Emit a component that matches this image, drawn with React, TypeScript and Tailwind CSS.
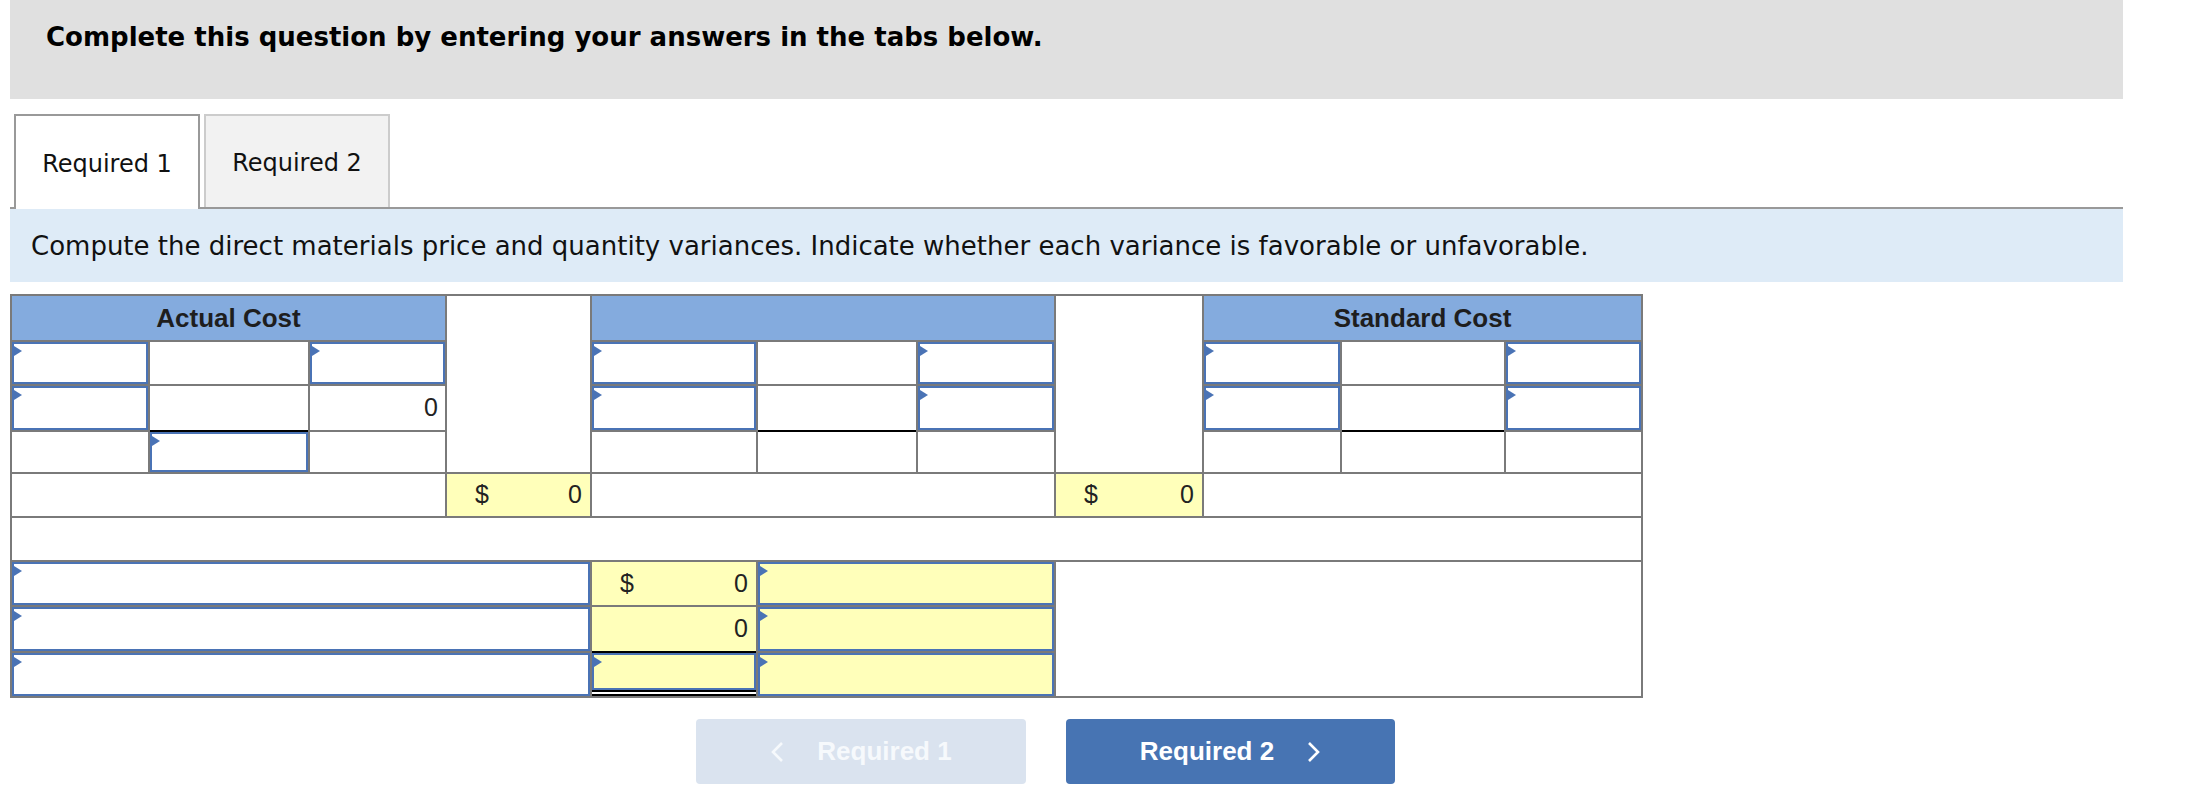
import React from "react";

const verdana = "font-['DejaVu_Sans','Verdana',sans-serif]";
const arial = "font-['Liberation_Sans','Arial',sans-serif]";

function Marker() {
  return (
    <span className="absolute left-0 top-[2px] h-0 w-0 border-y-[5px] border-l-[8px] border-y-transparent border-l-[#4a73b5]" />
  );
}

function Input({ className = "", yellow = false }: { className?: string; yellow?: boolean }) {
  return (
    <div
      className={`relative border-2 border-[#4a73b5] ${yellow ? "bg-[#ffffba]" : "bg-white"} ${className}`}
    >
      <Marker />
    </div>
  );
}

function Plain({ className = "", children }: { className?: string; children?: React.ReactNode }) {
  return <div className={`bg-white ${className}`}>{children}</div>;
}

function Money({ className = "", dollar = true }: { className?: string; dollar?: boolean }) {
  return (
    <div
      className={`flex items-center bg-[#ffffba] pl-[28px] pr-[8px] text-[25px] text-[#222] ${
        dollar ? "justify-between" : "justify-end"
      } ${className}`}
    >
      {dollar && <span>$</span>}
      <span>0</span>
    </div>
  );
}

function Chevron({ dir }: { dir: "left" | "right" }) {
  return (
    <svg width="14" height="22" viewBox="0 0 14 22" fill="none">
      <polyline
        points={dir === "left" ? "12,2 3,11 12,20" : "2,2 11,11 2,20"}
        stroke="currentColor"
        strokeWidth="2.6"
        strokeLinejoin="miter"
      />
    </svg>
  );
}

export default function App() {
  return (
    <div className="min-h-[790px] w-[2190px] bg-white pl-[10px] text-black">
      {/* Banner */}
      <div className="h-[99px] w-[2113px] bg-[#e0e0e0] pl-[36px] pt-[21px]">
        <h1 className={`${verdana} text-[26px] font-bold leading-[32px] text-black`}>
          Complete this question by entering your answers in the tabs below.
        </h1>
      </div>

      {/* Tabs */}
      <div className="mt-[15px] flex w-[2113px] items-start gap-[4px] border-b-2 border-[#999] pl-[4px]">
        <div
          className={`${verdana} -mb-[2px] flex h-[95px] w-[186px] items-center justify-center border-2 border-b-0 border-[#999] bg-white pt-[2px] text-[24px] text-[#111]`}
        >
          Required 1
        </div>
        <div
          className={`${verdana} flex h-[93px] w-[186px] items-center justify-center border-2 border-b-0 border-[#ccc] bg-[#f2f2f2] pt-[2px] text-[24px] text-[#111]`}
        >
          Required 2
        </div>
      </div>

      {/* Instructions */}
      <div className="flex h-[73px] w-[2113px] items-center bg-[#deebf7] pl-[21px]">
        <p className={`${verdana} pt-[2px] text-[26px] text-[#111]`}>
          Compute the direct materials price and quantity variances. Indicate whether each variance is favorable or unfavorable.
        </p>
      </div>

      {/* Worksheet */}
      <div
        className={`${arial} mt-[12px] grid w-[1633px] grid-cols-[136px_158px_135px_143px_164px_158px_136px_146px_136px_162px_135px] grid-rows-[44px_42px_44px_40px_42px_42px_43px_44px_43px] gap-[2px] bg-[#7a7a7a] p-[2px]`}
      >
        {/* header */}
        <div className="col-span-3 col-start-1 row-start-1 flex items-center justify-center bg-[#84abde] text-[26px] font-bold text-[#1e1e1e]">
          Actual Cost
        </div>
        <Plain className="col-start-4 row-span-4 row-start-1" />
        <div className="col-span-3 col-start-5 row-start-1 bg-[#84abde]" />
        <Plain className="col-start-8 row-span-4 row-start-1" />
        <div className="col-span-3 col-start-9 row-start-1 flex items-center justify-center bg-[#84abde] text-[26px] font-bold text-[#1e1e1e]">
          Standard Cost
        </div>

        {/* row 1 */}
        <Input className="col-start-1 row-start-2" />
        <Plain className="col-start-2 row-start-2" />
        <Input className="col-start-3 row-start-2" />
        <Input className="col-start-5 row-start-2" />
        <Plain className="col-start-6 row-start-2" />
        <Input className="col-start-7 row-start-2" />
        <Input className="col-start-9 row-start-2" />
        <Plain className="col-start-10 row-start-2" />
        <Input className="col-start-11 row-start-2" />

        {/* row 2 */}
        <Input className="col-start-1 row-start-3" />
        <Plain className="col-start-2 row-start-3 shadow-[0_2px_0_#000]" />
        <Plain className="col-start-3 row-start-3 flex items-center justify-end pr-[7px] text-[25px] text-[#222]">
          0
        </Plain>
        <Input className="col-start-5 row-start-3" />
        <Plain className="col-start-6 row-start-3 shadow-[0_2px_0_#000]" />
        <Input className="col-start-7 row-start-3" />
        <Input className="col-start-9 row-start-3" />
        <Plain className="col-start-10 row-start-3 shadow-[0_2px_0_#000]" />
        <Input className="col-start-11 row-start-3" />

        {/* row 3 */}
        <Plain className="col-start-1 row-start-4" />
        <Input className="col-start-2 row-start-4" />
        <Plain className="col-start-3 row-start-4" />
        <Plain className="col-start-5 row-start-4" />
        <Plain className="col-start-6 row-start-4" />
        <Plain className="col-start-7 row-start-4" />
        <Plain className="col-start-9 row-start-4" />
        <Plain className="col-start-10 row-start-4" />
        <Plain className="col-start-11 row-start-4" />

        {/* totals */}
        <Plain className="col-span-3 col-start-1 row-start-5" />
        <Money className="col-start-4 row-start-5" />
        <Plain className="col-span-3 col-start-5 row-start-5" />
        <Money className="col-start-8 row-start-5" />
        <Plain className="col-span-3 col-start-9 row-start-5" />

        {/* spacer row */}
        <Plain className="col-span-11 col-start-1 row-start-6" />

        {/* variances */}
        <Input className="col-span-4 col-start-1 row-start-7" />
        <Money className="col-start-5 row-start-7" />
        <Input yellow className="col-span-2 col-start-6 row-start-7" />
        <Plain className="col-span-4 col-start-8 row-span-3 row-start-7" />

        <Input className="col-span-4 col-start-1 row-start-8" />
        <Money dollar={false} className="col-start-5 row-start-8 shadow-[0_2px_0_#000]" />
        <Input yellow className="col-span-2 col-start-6 row-start-8" />

        <Input className="col-span-4 col-start-1 row-start-9" />
        <div className="col-start-5 row-start-9 flex flex-col border-b-[6px] border-double border-black bg-white">
          <Input yellow className="flex-1" />
        </div>
        <Input yellow className="col-span-2 col-start-6 row-start-9" />
      </div>

      {/* Navigation */}
      <div className={`${arial} ml-[686px] mt-[21px] flex gap-[40px] text-[26px] font-bold`}>
        <button className="flex h-[65px] w-[330px] items-center justify-center gap-[33px] rounded-[4px] bg-[#dae3ef] text-[#f6f9fc]">
          <Chevron dir="left" />
          <span>Required 1</span>
        </button>
        <button className="flex h-[65px] w-[329px] items-center justify-center gap-[33px] rounded-[4px] bg-[#4774b3] text-white">
          <span>Required 2</span>
          <Chevron dir="right" />
        </button>
      </div>
    </div>
  );
}
